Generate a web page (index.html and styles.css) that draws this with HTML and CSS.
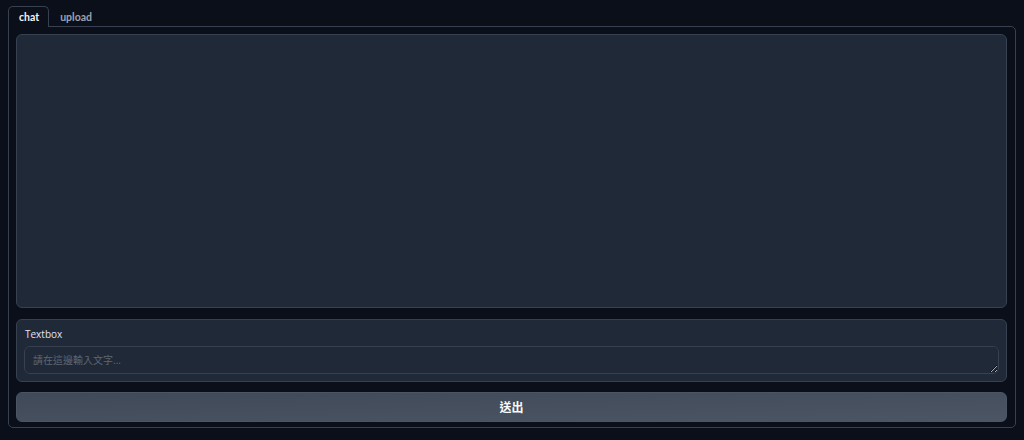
FILE: index.html
```html
<!DOCTYPE html>
<html lang="en">
  <head>
    <title>chat</title>
    <meta charset="UTF-8" />
    <meta name="viewport" content="width=device-width, initial-scale=1" />
    <link rel="stylesheet" href="styles.css">
  </head>
  <body>
    <div class="app">
      <nav class="tab-nav">
        <button class="tab selected">chat</button>
        <button class="tab">upload</button>
      </nav>

      <div class="tab-panel">
        <div class="chatbot"></div>

        <div class="block textbox-block">
          <label class="block-label" for="msg">Textbox</label>
          <textarea id="msg" rows="1" placeholder="請在這邊輸入文字..."></textarea>
        </div>

        <button class="send">送出</button>
      </div>
    </div>
  </body>
</html>
```

FILE: styles.css
```css
body {
  margin: 0;
  background: #0b0f19;
  font-family: "Open Sans", "Noto Sans CJK TC", sans-serif;
  --border-color: #374151;
  --block-bg: #1f2937;
}

.app {
  padding: 6px 8px 0 8px;
}

.tab-nav {
  display: flex;
  height: 20px;
}

.tab {
  box-sizing: border-box;
  height: 21px;
  margin-bottom: -1px;
  padding: 0 9px 0 10px;
  background: transparent;
  border: 1px solid transparent;
  border-bottom: none;
  border-top-left-radius: 5px;
  border-top-right-radius: 5px;
  color: #9ca3af;
  font-family: Lato, "Noto Sans CJK TC", sans-serif;
  font-size: 10.5px;
  font-weight: 700;
  cursor: pointer;
  position: relative;
  z-index: 1;
}

.tab.selected {
  border-color: var(--border-color);
  background: #0b0f19;
  color: #f3f4f6;
}

.tab-panel {
  box-sizing: border-box;
  height: 402px;
  border: 1px solid var(--border-color);
  border-top-right-radius: 5px;
  border-bottom-left-radius: 5px;
  border-bottom-right-radius: 5px;
  padding: 7px 8px 5px 7px;
  display: flex;
  flex-direction: column;
  gap: 11px;
}

.chatbot {
  flex: 1;
  background: var(--block-bg);
  border: 1px solid var(--border-color);
  border-radius: 6px;
}

.block {
  box-sizing: border-box;
  background: var(--block-bg);
  border: 1px solid var(--border-color);
  border-radius: 6px;
}

.textbox-block {
  height: 63px;
  padding: 8px 7px 7px 7px;
  display: flex;
  flex-direction: column;
  gap: 5px;
}

.block-label {
  font-size: 10px;
  font-weight: 500;
  color: #e0e4fc;
  line-height: 13px;
  padding-left: 1px;
}

textarea {
  box-sizing: border-box;
  height: 29px;
  width: 100%;
  resize: vertical;
  background: var(--block-bg);
  border: 1px solid var(--border-color);
  border-radius: 6px;
  padding: 6px 8px;
  color: #e5e7eb;
  font-family: inherit;
  font-size: 10px;
  line-height: 15px;
  outline: none;
}

textarea::placeholder {
  color: #5f6773;
}

.send {
  height: 30px;
  margin-top: -1px;
  border: 1px solid #4b5563;
  border-radius: 6px;
  background: linear-gradient(to bottom right, #404957, #4b5563);
  color: #f9fafb;
  font-family: inherit;
  font-size: 12px;
  font-weight: 700;
  cursor: pointer;
}
```
